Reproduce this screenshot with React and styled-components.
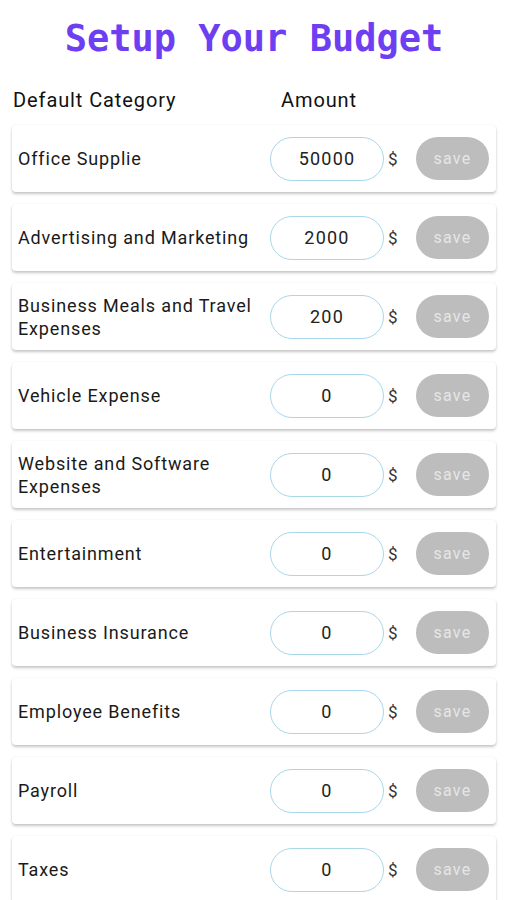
import styled, { createGlobalStyle } from "styled-components";

const Global = createGlobalStyle`
  body {
    margin: 0;
    background: #fff;
    font-family: Roboto, "Liberation Sans", sans-serif;
  }
`;

const Page = styled.div`
  width: 506px;
  padding: 14px 10px 0 12px;
  box-sizing: border-box;
`;

const Title = styled.h1`
  margin: 0;
  text-align: center;
  font-family: "DejaVu Sans Mono", monospace;
  font-weight: bold;
  font-size: 37px;
  line-height: 50px;
  color: #6d3ef2;
`;

const Header = styled.div`
  display: flex;
  align-items: center;
  height: 50px;
  margin-top: 11px;
  font-size: 20px;
  letter-spacing: 0.9px;
  color: #111;
  padding-left: 1px;
`;

const HeadCell = styled.div`
  width: ${(p) => p.w}px;
`;

const List = styled.div`
  display: flex;
  flex-direction: column;
  gap: 12px;
`;

const Card = styled.div`
  display: flex;
  align-items: center;
  height: 67px;
  padding: 0 7px 0 6px;
  background: #fff;
  border-radius: 4px;
  box-shadow: 0 2px 3px rgba(0, 0, 0, 0.22), 0 0 2px rgba(0, 0, 0, 0.06);
`;

const Label = styled.div`
  flex: 1;
  font-size: 18px;
  line-height: 23px;
  letter-spacing: 0.85px;
  color: #1a1a1a;
  padding-right: 6px;
`;

const Amount = styled.input`
  width: 114px;
  height: 44px;
  box-sizing: border-box;
  border: 1px solid #a9d7ea;
  border-radius: 22px;
  text-align: center;
  font-family: Roboto, "Liberation Sans", sans-serif;
  font-size: 18px;
  letter-spacing: 1.2px;
  color: #222;
  background: #fff;
  outline: none;
  padding: 0;
`;

const Dollar = styled.span`
  width: 32px;
  padding-left: 4px;
  box-sizing: border-box;
  font-size: 17px;
  color: #333;
`;

const SaveBtn = styled.button`
  width: 73px;
  height: 43px;
  border: none;
  border-radius: 22px;
  background: #bdbdbd;
  color: #e6e6e6;
  font-family: Roboto, "Liberation Sans", sans-serif;
  font-size: 16px;
  letter-spacing: 1.2px;
`;

const rows = [
  ["Office Supplie", "50000"],
  ["Advertising and Marketing", "2000"],
  ["Business Meals and Travel Expenses", "200"],
  ["Vehicle Expense", "0"],
  ["Website and Software Expenses", "0"],
  ["Entertainment", "0"],
  ["Business Insurance", "0"],
  ["Employee Benefits", "0"],
  ["Payroll", "0"],
  ["Taxes", "0"],
];

export default function App() {
  return (
    <Page>
      <Global />
      <Title>Setup Your Budget</Title>
      <Header>
        <HeadCell w={268}>Default Category</HeadCell>
        <HeadCell w={120}>Amount</HeadCell>
      </Header>
      <List>
        {rows.map(([name, val]) => (
          <Card key={name}>
            <Label>{name}</Label>
            <Amount defaultValue={val} />
            <Dollar>$</Dollar>
            <SaveBtn disabled>save</SaveBtn>
          </Card>
        ))}
      </List>
    </Page>
  );
}
